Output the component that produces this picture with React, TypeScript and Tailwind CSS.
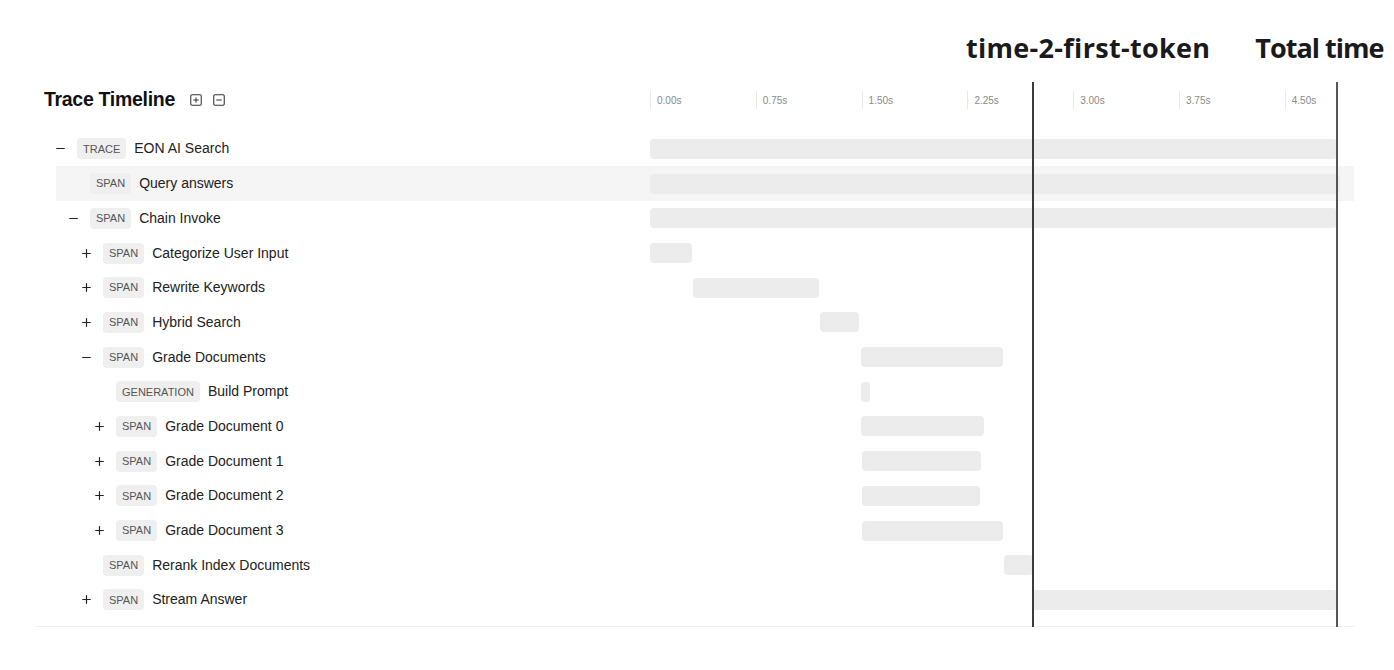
import { Minus, Plus, SquareMinus, SquarePlus } from "lucide-react";

type Row = {
  level: number;
  toggle: "plus" | "minus" | null;
  type: string;
  name: string;
  start: number;
  width: number;
  active?: boolean;
};

const rows: Row[] = [
  { level: 0, toggle: "minus", type: "TRACE", name: "EON AI Search", start: 0, width: 687 },
  { level: 1, toggle: null, type: "SPAN", name: "Query answers", start: 0, width: 690, active: true },
  { level: 1, toggle: "minus", type: "SPAN", name: "Chain Invoke", start: 0, width: 687 },
  { level: 2, toggle: "plus", type: "SPAN", name: "Categorize User Input", start: 0, width: 42 },
  { level: 2, toggle: "plus", type: "SPAN", name: "Rewrite Keywords", start: 43, width: 126 },
  { level: 2, toggle: "plus", type: "SPAN", name: "Hybrid Search", start: 170, width: 39 },
  { level: 2, toggle: "minus", type: "SPAN", name: "Grade Documents", start: 211, width: 142 },
  { level: 3, toggle: null, type: "GENERATION", name: "Build Prompt", start: 211, width: 9 },
  { level: 3, toggle: "plus", type: "SPAN", name: "Grade Document 0", start: 211, width: 123 },
  { level: 3, toggle: "plus", type: "SPAN", name: "Grade Document 1", start: 212, width: 119 },
  { level: 3, toggle: "plus", type: "SPAN", name: "Grade Document 2", start: 212, width: 118 },
  { level: 3, toggle: "plus", type: "SPAN", name: "Grade Document 3", start: 212, width: 141 },
  { level: 2, toggle: null, type: "SPAN", name: "Rerank Index Documents", start: 354, width: 29 },
  { level: 2, toggle: "plus", type: "SPAN", name: "Stream Answer", start: 383, width: 304 },
];

const indent = ["pl-0", "pl-[13px]", "pl-[26px]", "pl-[39px]"];
const ticks = ["0.00s", "0.75s", "1.50s", "2.25s", "3.00s", "3.75s", "4.50s"];

export default function App() {
  return (
    <div className="relative h-[670px] w-[1394px] overflow-hidden bg-white font-['Liberation_Sans',Arial,sans-serif] text-[#1f1f1f]">
      {/* annotations */}
      <div className="flex h-[82px] items-start pt-[34px] font-['Open_Sans',sans-serif] text-[27px] font-bold leading-none text-[#1a1a1a]">
        <span className="ml-[966px] whitespace-nowrap tracking-[0.3px]">time-2-first-token</span>
        <span className="ml-[45px] whitespace-nowrap tracking-[-1px]">Total time</span>
      </div>

      {/* header */}
      <div className="flex h-[36px] items-center">
        <div className="flex w-[650px] shrink-0 items-center pl-[44px]">
          <h2 className="text-[19.5px] font-bold tracking-[-0.3px] text-[#111]">Trace Timeline</h2>
          <SquarePlus className="ml-[14px] h-[14px] w-[14px] text-[#333]" strokeWidth={1.8} />
          <SquareMinus className="ml-[9px] h-[14px] w-[14px] text-[#333]" strokeWidth={1.8} />
        </div>
        <div className="flex w-[704px] shrink-0 items-center">
          {ticks.map((t) => (
            <div key={t} className="flex h-[18px] w-[105.8px] shrink-0 items-center border-l border-[#e8e8e8] pl-[6px] text-[10px] text-[#8a8a8a]">
              {t}
            </div>
          ))}
        </div>
      </div>

      {/* rows */}
      <div className="ml-[35px] mt-[13.6px] w-[1319px] border-b border-[#efefef] pb-[9px]">
        {rows.map((r) => (
          <div key={r.name} className={`ml-[21px] flex h-[34.7px] w-[1298px] items-center ${r.active ? "bg-[#f5f5f5]" : ""}`}>
            <div className={`flex w-[594px] shrink-0 items-center ${indent[r.level]}`}>
              <div className="flex w-[21px] items-center">
                {r.toggle === "minus" && <Minus className="-ml-[2px] h-[13px] w-[13px] text-[#222]" strokeWidth={2.2} />}
                {r.toggle === "plus" && <Plus className="-ml-[2px] h-[13px] w-[13px] text-[#222]" strokeWidth={2.2} />}
              </div>
              <span className="flex h-[21px] items-center rounded-[4px] bg-[#efefef] px-[6px] text-[11px] text-[#555]">
                {r.type}
              </span>
              <span className="ml-[8px] text-[14px] text-[#222]">{r.name}</span>
            </div>
            <div className="relative h-[20px] w-[704px] shrink-0">
              <div
                className="absolute top-0 h-[20px] rounded-[4px] bg-[#ececec]"
                style={{ left: r.start, width: r.width }}
              />
            </div>
          </div>
        ))}
      </div>

      {/* markers */}
      <div className="absolute left-[1032px] top-[82px] h-[545px] w-[2px] bg-[#3c3c3c]" />
      <div className="absolute left-[1336px] top-[82px] h-[545px] w-[2px] bg-[#555]" />
    </div>
  );
}
